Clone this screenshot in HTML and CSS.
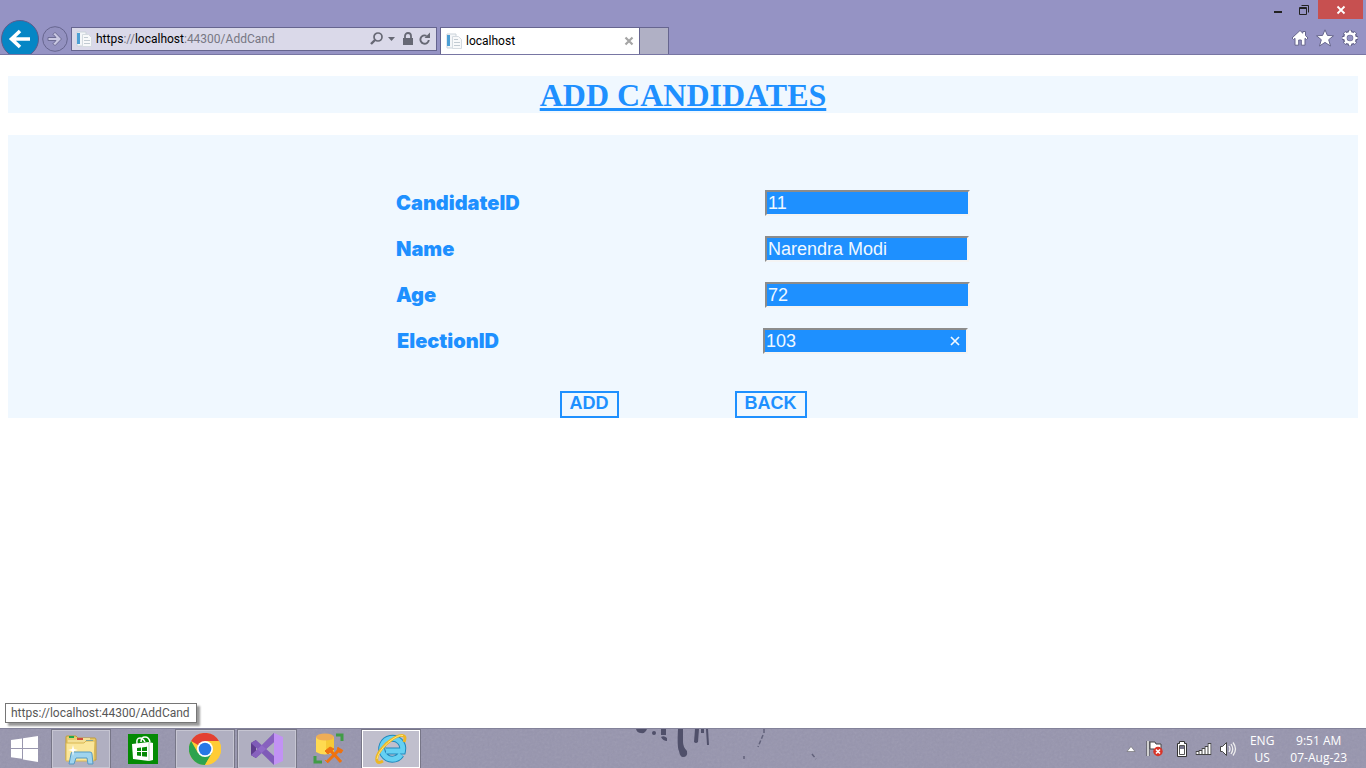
FILE: index.html
```html
<!DOCTYPE html>
<html lang="en">
<head>
<meta charset="utf-8">
<title>localhost</title>
<link rel="stylesheet" href="styles.css">
</head>
<body>
<header class="browser">
  <div class="window-buttons">
    <button class="win-btn" aria-label="Minimize"><svg width="10" height="10"><path d="M1 7h8" stroke="#222" stroke-width="2"/></svg></button>
    <button class="win-btn" aria-label="Restore"><svg width="12" height="12"><path d="M1.500 3.500h7v7h-7zM1 4.500h8M3.500 1.500h7v7" fill="none" stroke="#222"/></svg></button>
    <button class="win-btn win-close" aria-label="Close window"><svg width="10" height="10"><path d="M1.500 1.500l7 7M8.500 1.500l-7 7" stroke="#fff" stroke-width="1.800"/></svg></button>
  </div>
  <nav class="toolbar">
    <button class="back-nav" aria-label="Go back"><svg width="40" height="34" viewBox="0 0 40 34"><circle cx="20" cy="19" r="18.500" fill="#0586c5" stroke="#5b5c8d"/><path d="M30 19H12M20 11l-8.500 8 8.500 8" fill="none" stroke="#fff" stroke-width="3.600"/></svg></button>
    <button class="forward-nav" aria-label="Go forward"><svg width="26" height="26" viewBox="0 0 26 26"><circle cx="13" cy="13" r="12.300" fill="#9391c0" stroke="#67668f"/><path d="M6 11.500h8L11 8.300l2-2 6.500 6.700L13 19.700l-2-2 3-3.200H6z" fill="#c9c8e2" stroke="#6c6b94"/></svg></button>
    <div class="address">
      <svg class="page-icon" width="16" height="16" viewBox="0 0 16 16"><path d="M1 1h9v14H1z" fill="#f4f6f8" stroke="#cbd3da"/><path d="M1 2h3v11H1z" fill="#4c9fd4"/><path d="M6.500 3.500h6l3 3v9h-9z" fill="#f8f9fa" stroke="#d5dbe0"/><path d="M8 6.500h4M8 9.500h6M8 12.500h6" stroke="#c2cbd2"/></svg>
      <span class="url"><b>https</b>://<b>localhost</b>:44300/AddCand</span>
      <button class="tool" aria-label="Search"><svg width="16" height="16"><circle cx="10" cy="6" r="4" fill="none" stroke="#666874" stroke-width="1.700"/><path d="M7 9l-4 4" stroke="#666874" stroke-width="2.400"/></svg></button>
      <button class="tool" aria-label="Address history"><svg width="8" height="16"><path d="M1 6h7L4.500 10z" fill="#666874"/></svg></button>
      <button class="tool lock" aria-label="Security report"><svg width="12" height="16"><path d="M1 7h10v7H1z" fill="#666874"/><path d="M3 8V5a3 3 0 016 0v3" fill="none" stroke="#666874" stroke-width="1.800"/></svg></button>
      <button class="tool" aria-label="Refresh"><svg width="12" height="16"><path d="M9.800 9A4.200 4.200 0 117.500 4.800" fill="none" stroke="#666874" stroke-width="1.900"/><path d="M5.500 7H11V1.500z" fill="#666874"/></svg></button>
    </div>
    <div class="tab">
      <svg class="page-icon" width="16" height="16" viewBox="0 0 16 16"><path d="M1 1h9v14H1z" fill="#f4f6f8" stroke="#cbd3da"/><path d="M1 2h3v11H1z" fill="#4c9fd4"/><path d="M6.500 3.500h6l3 3v9h-9z" fill="#f8f9fa" stroke="#d5dbe0"/><path d="M8 6.500h4M8 9.500h6M8 12.500h6" stroke="#c2cbd2"/></svg>
      <span class="tab-name">localhost</span>
      <button class="tool" aria-label="Close tab"><svg width="10" height="10"><path d="M1.500 1.500l7 7M8.500 1.500l-7 7" stroke="#a5a5a5" stroke-width="2.200"/></svg></button>
    </div>
    <button class="new-tab" aria-label="New tab"></button>
    <div class="page-tools">
      <button class="tool" aria-label="Home"><svg width="18" height="18" viewBox="0 0 18 18"><path d="M9 1.500L1 9l1.500 1.500L4 9.300v6.900h3.700V11h2.600v5.200H14V9.300l1.500 1.200L17 9l-2.500-2.400V2.500h-2.700v1.700z" fill="#fff" stroke="#66658c"/></svg></button>
      <button class="tool" aria-label="Favorites"><svg width="18" height="18" viewBox="0 0 18 18"><path d="M9 .8l2.400 5.600 6.100.4-4.800 3.900 1.800 6.300L9 13.400 3.500 17l1.800-6.300L.5 6.800l6.100-.4z" fill="#fff" stroke="#66658c"/></svg></button>
      <button class="tool" aria-label="Tools"><svg width="18" height="18" viewBox="0 0 18 18"><g fill="none" stroke="#66658c"><circle cx="9" cy="9" r="5" stroke-width="4.500"/><path d="M9 1v3M9 14v3M1 9h3M14 9h3M3.300 3.300l2 2M12.700 12.700l2 2M14.700 3.300l-2 2M5.300 12.700l-2 2" stroke-width="4"/></g><g fill="none" stroke="#fff"><circle cx="9" cy="9" r="4.600" stroke-width="2.600"/><path d="M9 1.500v3M9 13.500v3M1.500 9h3M13.500 9h3M3.700 3.700l2 2M12.300 12.300l2 2M14.300 3.700l-2 2M5.700 12.300l-2 2" stroke-width="2.200"/></g></svg></button>
    </div>
  </nav>
</header>

<main class="page">
  <h1 class="title">ADD CANDIDATES</h1>
  <form class="candidate-form" onsubmit="return false">
    <div class="row"><label for="cid">CandidateID</label><input class="field" id="cid" value="11"></div>
    <div class="row"><label for="name">Name</label><input class="field field-name" id="name" value="Narendra Modi"></div>
    <div class="row"><label for="age">Age</label><input class="field" id="age" value="72"></div>
    <div class="row row-election"><label for="eid">ElectionID</label>
      <div class="clearable"><input class="field" id="eid" value="103"><button type="button" class="clear" aria-label="Clear"><svg width="10" height="10"><path d="M1 1l8 8M9 1L1 9" stroke="#f0f8ff" stroke-width="1.700"/></svg></button></div></div>
    <div class="actions"><button class="action">ADD</button><button type="button" class="action">BACK</button></div>
  </form>
  <div class="link-status">https://localhost:44300/AddCand</div>
</main>

<footer class="taskbar">
  <svg class="wallpaper" width="100%" height="40" aria-hidden="true">
    <filter id="grain"><feTurbulence type="fractalNoise" baseFrequency="0.4" numOctaves="3"/><feColorMatrix type="saturate" values="0"/></filter>
    <rect width="100%" height="40" filter="url(#grain)" opacity=".12"/>
    <g fill="#50506a"><path d="M636 0h11q-2 5-6 4-4 0-5-4"/><circle cx="654" cy="4" r="2"/><path d="M661 0h5v6h-5zM661 8q3-2 6 1v3q-4 0-6-4"/><path d="M678 0h5v13q0 5 4 9 1 6-4 6-3 0-4-6-2-3-1-22M695 0h4l-1 13q-2 2-4 0zM701 0h3v4h-3zM706 0h2l1 16h-2z"/></g>
    <path d="M764 0v4M763 6l-5 12M744 27v3M812 25l4 5" stroke="#62627b" stroke-width="1.500" stroke-dasharray="4 2"/>
  </svg>
  <button class="start" aria-label="Start"><svg width="28" height="26" viewBox="0 0 28 26"><path d="M0 4l11-1.500V12H0zM12 2.300L27 0v12H12zM0 13h11v9.800L0 21.300zM12 13h15v13l-15-2.500z" fill="#fff"/></svg></button>
  <div class="apps">
    <button class="app running" aria-label="File Explorer"><svg width="34" height="32" viewBox="0 0 34 32"><path d="M2 27V4q0-1 1-1h9l2 2h17q1 0 1 2v20z" fill="#e8cc70" stroke="#c19b36"/><path d="M5 3h5v2H5z" fill="#20a84a"/><path d="M4 7h8l2-2h12v20H4z" fill="#f3df96"/><path d="M13 5h6v2h-6z" fill="#d34b39"/><path d="M22 7h7v2h-7z" fill="#2e8fd2"/><path d="M2 10h18l2-2h9l-1 20H2z" fill="#fae69b" stroke="#d9b753"/><path d="M5 31l2-10q0-2 2-2h17q2 0 2 2l1 10h-5l-1-6H12l-2 6z" fill="#9fd4ee" stroke="#5599c2"/><path d="M9 12l1 4 4 1-4 1-1 5-1-5-4-1 4-1z" fill="#fff"/></svg></button>
    <button class="app" aria-label="Store"><svg width="30" height="30" viewBox="0 0 30 30"><path d="M0 0h30v30H0z" fill="#048a04"/><path d="M4 10l17-2 4 1v17l-4 1-16-2z" fill="#fff"/><path d="M21 8v19" stroke="#b7deb7"/><path d="M9 10q-1-6 3-6 3 0 5 4M13 8q0-5 4-5 4 0 5 5" fill="none" stroke="#fff" stroke-width="1.500"/><path d="M9 14l4-.5V17H9zM14 13.400l5-.7V17h-5zM9 18h4v4l-4-.5zM14 18h5v4.800l-5-.6z" fill="#048a04"/></svg></button>
    <button class="app running" aria-label="Chrome"><svg width="32" height="32" viewBox="0 0 32 32"><circle cx="16" cy="16" r="16" fill="#ffcc35"/><path d="M16 16L2.100 8A16 16 0 0129.900 8H16z" fill="#e34133"/><path d="M2.100 8A16 16 0 0016 32l7-12-14 0z" fill="#2da34e"/><path d="M16 8h13.900A16 16 0 0116 32l7-12z" fill="#ffcc35"/><circle cx="16" cy="16" r="8" fill="#fff"/><circle cx="16" cy="16" r="6.300" fill="#2878e6"/></svg></button>
    <button class="app running" aria-label="Visual Studio"><svg width="34" height="32" viewBox="0 0 34 32"><path d="M1 10l5-3v18l-5-3z" fill="#5e3c8e"/><path d="M1 22l5 3L24 9V0L11 13z" fill="#6a45a0"/><path d="M6 7l18 16v9L1 10z" fill="#7f5bb8"/><path d="M6 25l18-16V0L14 10 1 22z" fill="#9b74d2" opacity=".6"/><path d="M24 0l9 4v24l-9 4z" fill="#c292f4"/></svg></button>
    <button class="app" aria-label="Database tools"><svg width="32" height="32" viewBox="0 0 32 32"><path d="M3 4v15q9 5 18 0V4z" fill="#ffda50"/><path d="M13 5h8v14l-8 2z" fill="#f6c936"/><ellipse cx="12" cy="4" rx="9" ry="3.500" fill="#efad56"/><path d="M23 2h6v6M2 23v6h7" fill="none" stroke="#409c46" stroke-width="3"/><path d="M14 29l13-13M17 17l11 12" stroke="#ef720e" stroke-width="3"/><path d="M12 18l5-4 4 2-6 5zM25 14l-1 4 4 2 2-3M12 27l3 3" fill="#ef720e" stroke="#ef720e"/></svg></button>
    <button class="app running active" aria-label="Internet Explorer"><svg width="34" height="32" viewBox="0 0 34 32"><path d="M27 21.500A10.500 10.500 0 1128.500 18H12" fill="none" stroke="#2089bd" stroke-width="7"/><path d="M27 21.500A10.500 10.500 0 1128.500 18H12" fill="none" stroke="#65d0f2" stroke-width="5"/><path d="M9 28Q4 31 3 28 1 22 12 11 25 0 30 3q2 1 0 6" fill="none" stroke="#edb724" stroke-width="3"/><path d="M3 26Q4 19 14 9.500 25 1 29 2.500" fill="none" stroke="#ffe77a"/></svg></button>
  </div>
  <div class="tray">
    <button class="tool tray-more" aria-label="Show hidden icons"><svg width="10" height="8"><path d="M1 6.500h8L5 1.500z" fill="#fff" stroke="#666" stroke-width=".6"/></svg></button>
    <svg width="18" height="18" viewBox="0 0 18 18"><path d="M2 1v15" stroke="#444" stroke-width="3"/><path d="M2 1v15" stroke="#fff" stroke-width="1.500"/><path d="M4 2h5l1 2h5v7H9L8 9H4z" fill="#fff" stroke="#444"/><circle cx="12" cy="11.500" r="4.700" fill="#d93428"/><path d="M10 9.500l4 4M14 9.500l-4 4" stroke="#fff" stroke-width="1.600"/></svg>
    <svg class="battery" width="12" height="18" viewBox="0 0 12 18"><path d="M1.500 3.500h2v-2h5v2h2v13h-9z" fill="#fff" stroke="#333"/><path d="M3.500 5.500h5v9h-5z" fill="#fff" stroke="#555"/><path d="M4 6h4v3H4z" fill="#77768c"/></svg>
    <svg width="18" height="16" viewBox="0 0 18 16"><path d="M2.500 10v4M5.500 9v5M8.500 7v7M11.500 5v9M14.500 2v12" stroke="#444" stroke-width="3.500"/><path d="M2.500 11v2M5.500 10v3M8.500 8v5M11.500 6v7M14.500 3v10" stroke="#fff" stroke-width="2"/></svg>
    <svg class="volume" width="18" height="16" viewBox="0 0 18 16"><path d="M1.500 5.500h2l4-4v13l-4-4h-2z" fill="#fff" stroke="#444"/><path d="M10 5q2 3 0 6M12 3q3.500 5 0 10M14 1.500q5 6.500 0 13" fill="none" stroke="#eee" stroke-width="1.300"/></svg>
    <div class="tray-text language"><span>ENG</span><span>US</span></div>
    <div class="tray-text clock"><span>9:51 AM</span><span>07-Aug-23</span></div>
  </div>
</footer>
</body>
</html>
```
FILE: styles.css
```css
* { box-sizing: border-box; }
body { margin: 0; min-height: 100vh; display: flex; flex-direction: column; background: #fff; font-family: Roboto, "Open Sans", sans-serif; font-size: 12px; }
button { padding: 0; border: 0; background: none; font: inherit; color: inherit; }
svg { display: block; flex: none; }
.tool { display: flex; align-items: center; justify-content: center; }

.browser { background: #9593c4; border-bottom: 1px solid #7876a3; }
.window-buttons { display: flex; justify-content: flex-end; height: 20px; padding-right: 3px; }
.win-btn { width: 26px; height: 19px; display: flex; align-items: center; justify-content: center; }
.win-close { width: 45px; background: #c75050; margin-left: 1px; }
.toolbar { display: flex; align-items: flex-end; height: 34px; }
.back-nav { width: 40px; }
.forward-nav { margin: 0 3px 2px 2px; }
.address { display: flex; align-items: center; width: 366px; height: 24px; margin-bottom: 3px; padding: 0 5px 0 4px; border: 1px solid #66658f; background: #dad9e9; }
.url { flex: 1; margin-left: 4px; color: #777783; white-space: nowrap; }
.url b { font-weight: 400; color: #000; }
.address .tool + .tool { margin-left: 3px; }
.address .tool.lock { margin-left: 7px; }
.address .lock + .tool { margin-left: 5px; }
.tab { display: flex; align-items: center; width: 200px; height: 27px; margin-left: 3px; padding: 0 5px; border: 1px solid #66658f; border-bottom: 0; background: #fff; }
.tab-name { flex: 1; margin-left: 4px; }
.new-tab { width: 29px; height: 27px; border: 1px solid #66658f; border-width: 1px 1px 0 0; background: #b0b0c5; }
.page-tools { display: flex; gap: 7px; margin-left: auto; padding: 0 7px 7px 0; }

.page { flex: 1; position: relative; padding: 21px 8px 0; }
.title { margin: 0 0 22px; padding-top: 2px; background: #f0f8ff; color: #1e90ff; font: bold 32px/35px "Liberation Serif", serif; text-align: center; text-decoration: underline; }
.candidate-form { display: flex; flex-direction: column; align-items: center; gap: 20px; padding-top: 55px; background: #f0f8ff; color: #1e90ff; }
.row { display: grid; grid-template-columns: 369px 205px; align-items: center; }
.row-election { grid-template-columns: 366px 206px; }
.row label { font: 900 20px/26px Inter, sans-serif; }
.field { width: 205px; height: 26px; padding: 0 1px; border: 2px solid; border-color: #8c8c8c #f4f4f4 #f4f4f4 #8c8c8c; border-radius: 0; background: #1e90ff; color: #f0f8ff; font: 18px "Liberation Sans", sans-serif; }
.field-name { width: 204px; }
.clearable { position: relative; }
.clearable .field { display: block; }
.clear { position: absolute; right: 9px; top: 8px; }
.actions { display: flex; gap: 116px; margin-top: 17px; }
.action { height: 27px; padding: 0 8px 2px; border: 2px solid #1e90ff; font: bold 18px/21px "Liberation Sans", sans-serif; }
.link-status { position: absolute; left: 5px; bottom: 5px; padding: 0 6px 0 5px; border: 1px solid #767676; background: #fff; color: #575757; box-shadow: 3px 3px 2px #999; line-height: 18px; }

.taskbar { position: relative; display: flex; align-items: center; height: 40px; background: #9795ae; border-top: 1px solid #83829a; }
.taskbar > :not(.wallpaper) { position: relative; }
.taskbar .wallpaper { position: absolute; inset: 0; }
.start { width: 51px; display: flex; padding-left: 11px; }
.apps { display: flex; gap: 2px; }
.app { width: 60px; height: 40px; display: flex; align-items: center; justify-content: center; }
.running { border: 1px solid #777687; background: #b0afc1; box-shadow: inset 0 0 0 1px #c6c5d2; }
.active { background: #c0bfcd; box-shadow: inset 0 0 0 1px #fff; }
.tray { display: flex; align-items: center; margin-left: auto; padding-right: 19px; color: #fff; }
.tray-more { margin-right: 10px; }
.battery { margin: 0 7px 0 12px; }
.volume { margin-left: 6px; }
.tray-text { display: flex; flex-direction: column; align-items: center; line-height: 17px; font-family: "Open Sans", sans-serif; }
.language { margin-left: 13px; }
.clock { margin-left: 16px; }
```
